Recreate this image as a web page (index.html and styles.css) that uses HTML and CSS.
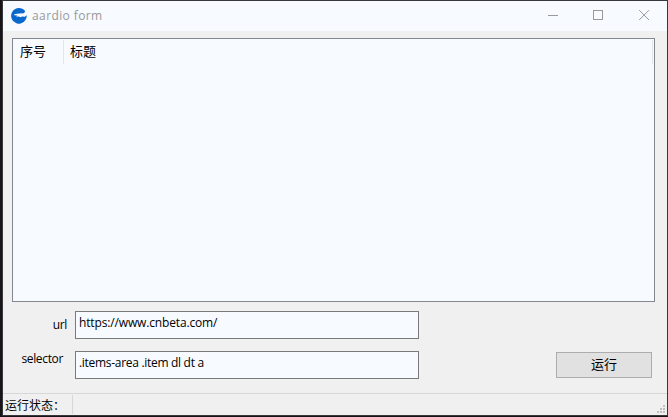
FILE: index.html
```html
<!DOCTYPE html>
<html lang="zh-CN">
<head>
<meta charset="utf-8">
<title>aardio form</title>
<link rel="stylesheet" href="styles.css">
</head>
<body>
<div class="window">
  <header class="titlebar">
    <svg class="logo" width="16" height="16" viewBox="0 0 16 16">
      <path d="M14.2 3.2A7.8 7.8 0 1 0 15.7 7.2L13.8 8.7L11 8.4L9.4 9.3L8 8.5L5 8.4L6.6 7.4L3.4 7.3L3.2 6.2L8 5.6L13 5.2Z" fill="#0968cb"/>
    </svg>
    <span class="caption">aardio form</span>
    <svg class="controls" width="135" height="30" viewBox="0 0 135 30" fill="none" stroke="#999" shape-rendering="crispEdges">
      <path d="M17 14.5H27M62.5 9.5H71.5V18.5H62.5Z"/>
      <path d="M108.2 9.2L118 19M118 9.2L108.2 19" shape-rendering="auto"/>
    </svg>
  </header>
  <main class="client">
    <section class="list">
      <div class="list-head">
        <div class="col col-index">序号</div>
        <div class="col col-title">标题</div>
      </div>
    </section>
    <div class="form">
      <label class="label-url" for="url">url</label>
      <input class="field field-url" id="url" value="https://www.cnbeta.com/">
      <label class="label-selector" for="selector">selector</label>
      <input class="field" id="selector" value=".items-area .item dl dt a">
      <button class="run">运行</button>
    </div>
  </main>
  <footer class="status">
    <div class="status-text">运行状态：</div>
    <svg class="grip" width="8" height="8" viewBox="0 0 8 8" fill="#bfbfbf">
      <path d="M6 0h2v2h-2zM3 3h2v2h-2zM6 3h2v2h-2zM0 6h2v2h-2zM3 6h2v2h-2zM6 6h2v2h-2z"/>
    </svg>
  </footer>
</div>
</body>
</html>
```

FILE: styles.css
```css
* { box-sizing: border-box; }
body {
  margin: 0;
  background: #17151a;
  font-family: "Open Sans", "Noto Sans CJK SC", sans-serif;
  font-size: 12px;
  color: #000;
  overflow: hidden;
}
.window {
  display: flex;
  flex-direction: column;
  width: 666px;
  height: 416px;
  margin-left: 2px;
  border: 1px solid #38383b;
  background: #f0f0f0;
}
.titlebar {
  display: flex;
  align-items: center;
  flex: none;
  height: 30px;
  padding-left: 8px;
  background: #f7fbff;
}
.logo { margin-top: -1px; }
.caption {
  margin-left: 5px;
  letter-spacing: 0.4px;
  line-height: 20px;
  color: #999;
}
.controls { margin-left: auto; margin-right: 1px; }
.client {
  flex: 1;
  padding: 7px 0 0 9px;
}
.list {
  width: 643px;
  height: 264px;
  border: 1px solid #828790;
  background: #f7fbff;
  padding: 1px 1px 0 0;
}
.list-head { display: flex; height: 24px; }
.col {
  border-right: 1px solid #e3e6e9;
  font: 13px/22px "Noto Sans CJK SC", sans-serif;
}
.col-index { width: 51px; padding-left: 7px; }
.col-title { flex: 1; padding-left: 6px; }
.form {
  display: grid;
  grid-template-columns: 63px 344px 137px 96px;
  grid-template-rows: 28px 28px;
  row-gap: 12px;
  margin-top: 9px;
}
.form label {
  grid-column: 1;
  line-height: 16px;
  letter-spacing: -0.35px;
  text-align: right;
}
.label-url { padding: 6px 8px 0 0; }
.form .label-selector { padding-right: 12px; letter-spacing: -0.35px; }
.field {
  width: 344px;
  height: 28px;
  border: 1px solid #7a7a7a;
  border-radius: 0;
  background: #f7fbff;
  padding: 0 3px 6px;
  font: 12px/16px "Open Sans", sans-serif;
  letter-spacing: -0.3px;
  color: #000;
  outline: none;
}
.field-url { letter-spacing: -0.15px; }
.run {
  grid-column: 4;
  width: 96px;
  height: 26px;
  margin-top: 1px;
  padding: 0 0 2px;
  border: 1px solid #adadad;
  border-radius: 0;
  background: #e1e1e1;
  color: #000;
  font: 13px/20px "Noto Sans CJK SC", sans-serif;
}
.status {
  display: flex;
  flex: none;
  justify-content: space-between;
  height: 22px;
  padding-top: 1px;
  border-top: 1px solid #d7d7d7;
}
.status-text {
  width: 70px;
  height: 19px;
  padding-left: 2px;
  border-right: 1px solid #d7d7d7;
  font: 12px/19px "Noto Sans CJK SC", sans-serif;
  white-space: nowrap;
}
.grip { align-self: flex-end; margin: 0 2px 2px 0; }
```
